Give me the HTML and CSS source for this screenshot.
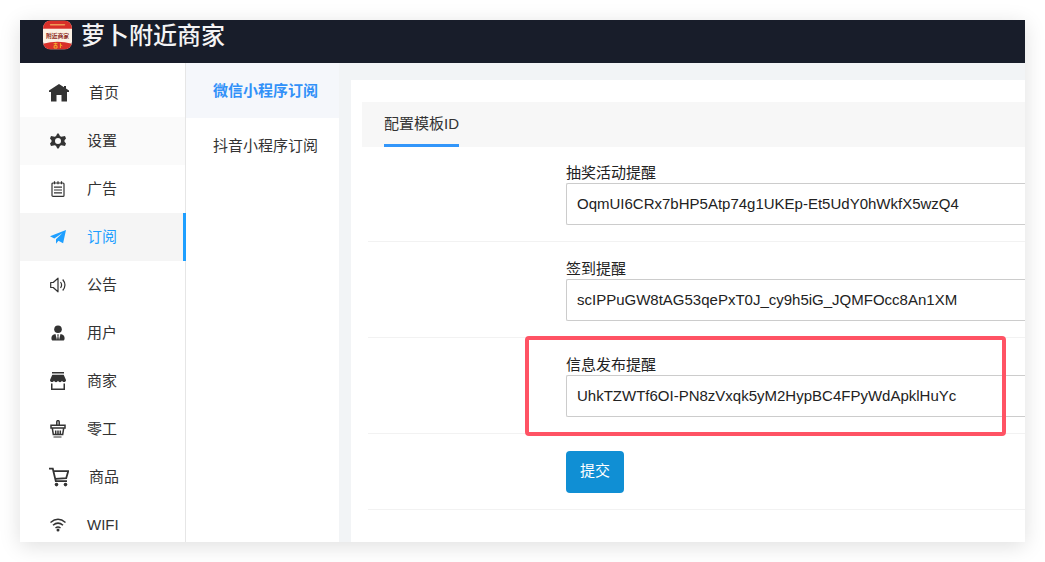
FILE: index.html
```html
<!DOCTYPE html>
<html lang="zh-CN">
<head>
<meta charset="utf-8">
<meta name="viewport" content="width=device-width, initial-scale=1">
<title>萝卜附近商家</title>
<link rel="stylesheet" href="styles.css">
</head>
<body>
<div class="app">
  <header class="topbar">
    <svg class="logo" viewBox="0 0 30 30" aria-hidden="true">
      <defs><clipPath id="logo-clip"><rect width="30" height="30" rx="8"/></clipPath></defs>
      <g clip-path="url(#logo-clip)">
        <rect width="30" height="30" fill="#fbf1e4"/>
        <rect width="30" height="8.500" fill="#d8302a"/>
        <rect x="7" y="3.500" width="16" height="1.600" rx=".8" fill="#ee9a58"/>
        <path d="M0 24 Q15 20 30 24 V30 H0Z" fill="#d8302a"/>
        <path d="M11 24h4M13 23v2M11.500 26h3v2.500h-3zM18 23.500v5M18 25l2 1.300" stroke="#f5b22c" stroke-width="1" fill="none"/>
        <text class="logo-text" x="15" y="18" text-anchor="middle">附近商家</text>
      </g>
    </svg>
    <h1 class="brand">萝卜附近商家</h1>
  </header>
  <div class="body">
    <nav class="sidebar" aria-label="主菜单">
      <a class="nav-item wide" href="#"><svg class="icon" viewBox="0 0 20 20"><path d="M10 1 0 7.500V9h2v9.500H7.500V12h5v6.500H18V9h2V7.500L17 5.500V3h-2v1.200Z"/></svg><span>首页</span></a>
      <a class="nav-item hover" href="#"><svg class="icon" viewBox="0 0 16 16"><path fill-rule="evenodd" d="M6.600 1.800 8 0l1.400 1.800.5 1.200 1.300.7L15 3l1 2.600-1.500 1.600v1.600L16 10.400l-1 2.600-3.800-.7-1.300.7-.5 1.200L8 16l-1.400-1.800-.5-1.200-1.300-.7L1 13l-1-2.600 1.500-1.600V7.200L0 5.600 1 3l3.800.7L6.100 3ZM8 5a3 3 0 1 0 0 6 3 3 0 0 0 0-6Z"/></svg><span>设置</span></a>
      <a class="nav-item" href="#"><svg class="icon" viewBox="0 0 16 16"><g fill="none" stroke="currentColor" stroke-width="1.200"><rect x="2" y="2" width="12" height="13.400" rx="1"/><path d="M4.500 .2v3M8 .2v3M11.500 .2v3M4 6.200h8M4 9h8M4 11.800h8"/></g></svg><span>广告</span></a>
      <a class="nav-item active" href="#" aria-current="page"><svg class="icon" viewBox="0 0 16 16"><path d="M16 1 0 7.200l4.300 2.300L12.500 4 6 10.300v4.500l2.400-3.100 4.700 2.500Z"/></svg><span>订阅</span></a>
      <a class="nav-item" href="#"><svg class="icon" viewBox="0 0 16 16"><g fill="none" stroke="currentColor" stroke-width="1.200" stroke-linejoin="round"><path d="M.7 5.500h2.500L8 1.200v13.600L3.200 10.500H.7Z"/><path d="M10.500 5q2.200 3 0 6M12.700 2.500q4.500 5.500 0 11"/></g></svg><span>公告</span></a>
      <a class="nav-item" href="#"><svg class="icon" viewBox="0 0 16 16"><circle cx="8" cy="4.200" r="3.800"/><path d="M5.500 9 7 15l.6-4L7 9.500h2L8.400 11l.6 4 1.500-6c2.500.5 4.100 1.600 4.100 4 0 2-.6 2.500-1.600 2.500H3c-1 0-1.600-.5-1.600-2.500 0-2.400 1.600-3.500 4.100-4Z"/></svg><span>用户</span></a>
      <a class="nav-item" href="#"><svg class="icon tall" viewBox="0 0 16 18"><path d="M2 0h12v1.600H2ZM2.300 2.800h11.400L16 8c0 2.600-3.200 2.600-4 .8-.8 1.800-3.200 1.800-4 0-.8 1.800-3.200 1.800-4 0C3.200 10.600 0 10.600 0 8ZM1 11.500h1.500v5h11v-5H15V18H1Z"/></svg><span>商家</span></a>
      <a class="nav-item" href="#"><svg class="icon tall" viewBox="0 0 16 18"><g fill="none" stroke="currentColor" stroke-width="1.500"><path d="M6.800 5V2q0-1.400 1.200-1.400T9.200 2v3M1 5.300h14v2.800H1ZM2.300 8.200l1 6.200h9.400l1-6.200M5.700 10.500v4M8 10.500v4M10.300 10.500v4"/><path d="M3.500 17h8" stroke-width="1"/></g></svg><span>零工</span></a>
      <a class="nav-item wide" href="#"><svg class="icon" viewBox="0 0 20 20"><g fill="none" stroke="currentColor" stroke-width="1.800"><path d="M0 1.700h3.800l3 12.500H18M4.700 4.200h14.500l-2 7-11 .6"/></g><circle cx="7.500" cy="17.600" r="1.800"/><circle cx="16.500" cy="17.600" r="1.800"/></svg><span>商品</span></a>
      <a class="nav-item" href="#"><svg class="icon" viewBox="0 0 16 16"><g fill="none" stroke="currentColor" stroke-width="1.500"><path d="M.5 5.500q7.500-6.500 15 0M3 8.300q5-4.300 10 0M5.500 11q2.500-2 5 0"/></g><circle cx="8" cy="13" r="1.500"/></svg><span>WIFI</span></a>
    </nav>
    <nav class="submenu" aria-label="订阅">
      <a class="sub-item selected" href="#" aria-current="page">微信小程序订阅</a>
      <a class="sub-item" href="#">抖音小程序订阅</a>
    </nav>
    <main class="content">
      <section class="panel">
        <div class="tabs"><a class="tab" href="#">配置模板ID</a></div>
        <form class="form">
          <div class="row">
            <label for="lottery">抽奖活动提醒</label>
            <input id="lottery" type="text" value="OqmUI6CRx7bHP5Atp74g1UKEp-Et5UdY0hWkfX5wzQ4">
          </div>
          <div class="row">
            <label for="checkin">签到提醒</label>
            <input id="checkin" type="text" value="scIPPuGW8tAG53qePxT0J_cy9h5iG_JQMFOcc8An1XM">
          </div>
          <div class="row marked">
            <label for="publish">信息发布提醒</label>
            <input id="publish" type="text" value="UhkTZWTf6OI-PN8zVxqk5yM2HypBC4FPyWdApklHuYc">
          </div>
          <div class="row">
            <button class="submit" type="submit">提交</button>
          </div>
        </form>
      </section>
    </main>
  </div>
</div>
</body>
</html>
```
FILE: styles.css
```css
* { box-sizing: border-box; }

body {
  margin: 0;
  padding: 20px;
  height: 100vh;
  overflow: hidden;
  background: #fff;
  color: #333;
  font: 15px/20px "Liberation Sans", "Noto Sans CJK SC", sans-serif;
}

a { color: inherit; text-decoration: none; }

.app {
  display: flex;
  flex-direction: column;
  height: 100%;
  overflow: hidden;
  background: #fff;
  box-shadow: 0 4px 20px rgba(0, 0, 0, .13);
}

.topbar {
  display: flex;
  flex: none;
  gap: 9px;
  height: 43px;
  padding-left: 23px;
  background: #181d2a;
}

.logo { width: 29px; height: 30px; }
.logo-text { font-size: 6px; font-weight: 700; fill: #8c2820; }

.brand {
  margin: 0;
  color: #f4f4f5;
  font-size: 24px;
  font-weight: 500;
  line-height: 31px;
}

.body { display: flex; flex: 1; min-height: 0; }

.sidebar {
  flex: none;
  width: 166px;
  padding-top: 6px;
  border-right: 1px solid #e6e6e6;
}

.nav-item {
  display: flex;
  align-items: center;
  gap: 21px;
  height: 48px;
  padding-left: 30px;
}

.nav-item.wide { padding-left: 29px; gap: 20px; }
.nav-item.wide .icon { width: 20px; height: 20px; }
.nav-item.hover { background: #fafafa; }
.nav-item.active {
  margin-right: -1px;
  background: #f5f5f5;
  border-right: 3px solid #1e9fff;
  color: #1e9fff;
}

.icon { flex: none; width: 16px; height: 16px; fill: currentColor; }
.icon.tall { height: 18px; }

.submenu { flex: none; width: 153px; }

.sub-item {
  display: flex;
  align-items: center;
  height: 55px;
  padding-left: 27px;
  white-space: nowrap;
}

.sub-item.selected {
  background: #f5f7fb;
  color: #3291f8;
  font-weight: 700;
}

.content {
  flex: 1;
  min-width: 0;
  padding: 17px 0 0 12px;
  background: #f2f4f6;
}

.panel {
  height: 100%;
  padding: 22px 0 0 11px;
  background: #fff;
}

.tabs {
  display: flex;
  height: 45px;
  padding-left: 22px;
  background: #f7f7f7;
}

.tab {
  border-bottom: 3px solid #3296fa;
  line-height: 43px;
}

.form { margin-top: -1px; padding-left: 6px; }

.row {
  position: relative;
  display: flex;
  flex-direction: column;
  align-items: flex-start;
  padding: 17px 0 16px 198px;
  border-bottom: 1px solid #f2f2f2;
}

.row label { color: #222; }

.row input {
  width: 100%;
  height: 42px;
  padding: 0 10px 2px;
  border: 1px solid #ccc;
  border-right: 0;
  border-radius: 2px 0 0 2px;
  background: #fff;
  color: #222;
  font: inherit;
}

.marked::after {
  content: "";
  position: absolute;
  inset: -2px 19px -3px 157px;
  border: 4px solid #ff5364;
  border-radius: 4px;
  pointer-events: none;
}

.submit {
  height: 42px;
  padding: 0 14px 2px;
  border: 0;
  border-radius: 4px;
  background: #108fd4;
  color: #fff;
  font: inherit;
}
```
